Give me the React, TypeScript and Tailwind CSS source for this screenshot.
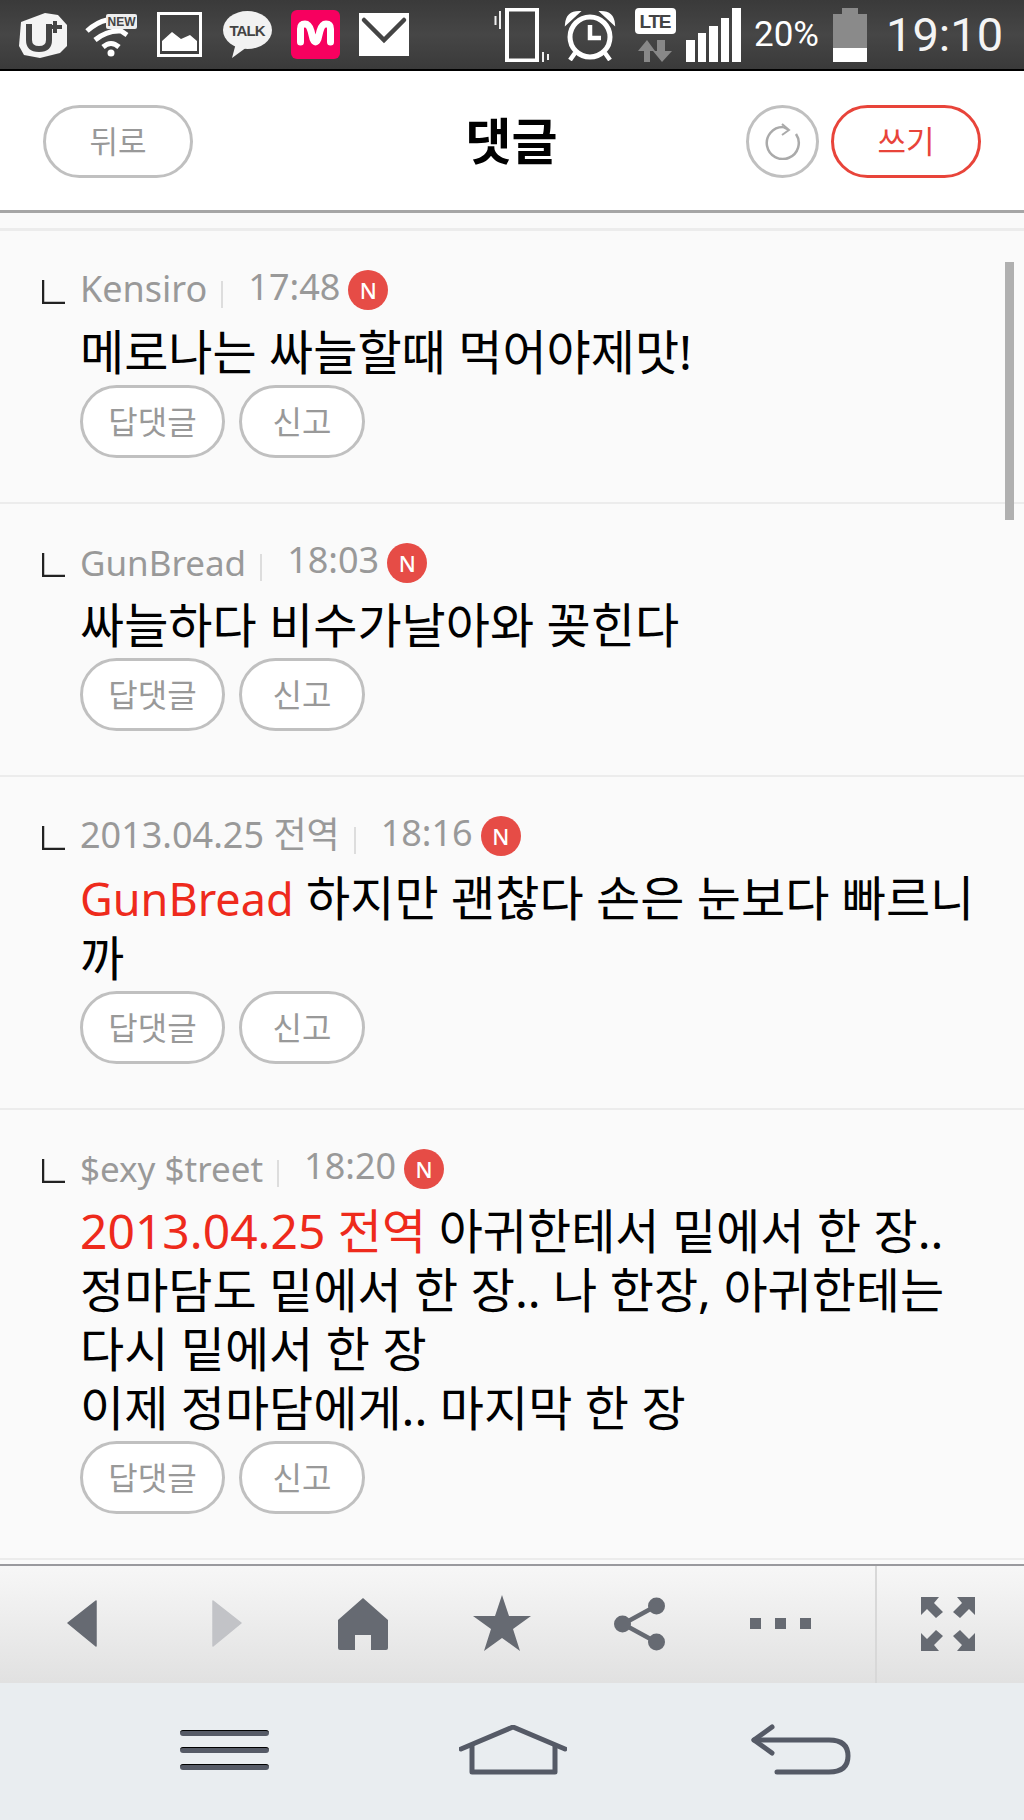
import React from 'react';

const fontStack = "font-['Noto_Sans','Noto_Sans_CJK_KR',sans-serif]";

const StatusIcons: React.FC = () => (
  <div className="flex items-center">
    {/* U+ */}
    <svg className="ml-[18px]" width="50" height="46" viewBox="0 0 50 46">
      <path d="M3 10 L27 1 L40 3 L49 13 L49 34 L42 41 L22 46 L6 43 L1 34 Z" fill="#f4f4f4" />
      <path d="M11 12 L11 28 Q11 37 21 37 Q31 37 31 28 L31 12" fill="none" stroke="#444" strokeWidth="6" />
      <path d="M37 9 L37 21 M31 15 L44 15" stroke="#444" strokeWidth="4" />
    </svg>
    {/* wifi + NEW */}
    <svg className="ml-[17px]" width="52" height="44" viewBox="0 0 52 44">
      <path d="M2 18 Q12 9 22 7" fill="none" stroke="#fff" strokeWidth="5" />
      <path d="M10 27 Q22 17 36 18 L42 22" fill="none" stroke="#fff" strokeWidth="5" />
      <path d="M18 34 Q26 27 34 34" fill="none" stroke="#fff" strokeWidth="5" />
      <circle cx="26" cy="40" r="3.5" fill="#fff" />
      <rect x="21" y="1" width="31" height="15" rx="2" fill="#eee" />
      <text x="36.5" y="13" textAnchor="middle" fontSize="12" fontWeight="700" fill="#444" fontFamily="Liberation Sans">NEW</text>
    </svg>
    {/* picture */}
    <svg className="ml-[20px]" width="45" height="45" viewBox="0 0 45 45">
      <rect x="1.5" y="1.5" width="42" height="42" fill="none" stroke="#fff" strokeWidth="3" />
      <path d="M5 39 L5 29 L15 20 L24 27 L33 23 L40 29 L40 39 Z" fill="#fff" />
    </svg>
    {/* talk */}
    <svg className="ml-[21px]" width="49" height="47" viewBox="0 0 49 47">
      <ellipse cx="24.5" cy="19" rx="24.5" ry="19" fill="#f2f2f2" />
      <path d="M13 32 L9 47 L24 36 Z" fill="#f2f2f2" />
      <text x="24.5" y="25" textAnchor="middle" fontSize="15" fontWeight="700" fill="#444" fontFamily="Liberation Sans" textLength="36">TALK</text>
    </svg>
    {/* M */}
    <svg className="ml-[19px]" width="49" height="49" viewBox="0 0 49 49">
      <rect width="49" height="49" rx="6" fill="#f7005f" />
      <path d="M9.5 32 L9.5 19 Q9.5 14 14 14 Q18 14 20 21 L22 29 Q24.5 35 27 29 L29 21 Q31 14 35 14 Q39.5 14 39.5 19 L39.5 32" fill="none" stroke="#fff" strokeWidth="7" strokeLinecap="round" />
    </svg>
    {/* mail */}
    <svg className="ml-[19px]" width="50" height="43" viewBox="0 0 50 43">
      <rect width="50" height="43" fill="#fff" />
      <path d="M5 7 L25 27 L45 7" fill="none" stroke="#444" strokeWidth="4.5" strokeLinecap="round" />
    </svg>
  </div>
);

const StatusRight: React.FC = () => (
  <div className="flex items-center">
    {/* vibrate */}
    <svg width="57" height="54" viewBox="0 0 57 54">
      <rect x="13" y="1.5" width="30" height="51" fill="none" stroke="#fff" strokeWidth="4" />
      <path d="M6 3 V21 M1.5 8 V17 M49 44 V54 M54 46 V52" stroke="#f0f0f0" strokeWidth="2" />
    </svg>
    {/* alarm */}
    <svg className="ml-[13px]" width="52" height="52" viewBox="0 0 52 52">
      <circle cx="26" cy="28" r="20" fill="none" stroke="#fff" strokeWidth="5" />
      <path d="M26 16 V29 H37" fill="none" stroke="#fff" strokeWidth="4.5" />
      <path d="M2 15 Q3 3 15 3 Z M50 15 Q49 3 37 3 Z" fill="#fff" stroke="#fff" strokeWidth="2" />
      <path d="M11 44 L6 51 M41 44 L46 51" stroke="#fff" strokeWidth="4.5" />
    </svg>
    {/* LTE + arrows */}
    <svg className="ml-[19px]" width="41" height="54" viewBox="0 0 41 54">
      <rect width="41" height="26" rx="4" fill="#fff" />
      <text x="20.5" y="20" textAnchor="middle" fontSize="19" fontWeight="700" fill="#444" fontFamily="Liberation Sans" textLength="32">LTE</text>
      <path d="M3 43 H9 V54 H15 V43 H20 L12 32 Z" fill="#888" />
      <path d="M22 32 H30 V43 H37 L27 54 L18 43 H22 Z" fill="#888" />
    </svg>
    {/* signal */}
    <div className="ml-[10px] flex h-[54px] w-[55px] items-end gap-[3px]">
      <div className="h-[22px] w-[9px] bg-white" />
      <div className="h-[29px] w-[8px] bg-white" />
      <div className="h-[36px] w-[9px] bg-white" />
      <div className="h-[44px] w-[8px] bg-white" />
      <div className="h-[54px] w-[9px] bg-white" />
    </div>
    <span className="ml-[13px] w-[65px] text-[35px] leading-none text-white font-['Roboto',sans-serif]">20%</span>
    {/* battery */}
    <div className="ml-[14px] flex h-[54px] w-[34px] flex-col items-center">
      <div className="h-[6px] w-[16px] bg-[#8a8a8a]" />
      <div className="h-[34px] w-[34px] bg-[#8a8a8a]" />
      <div className="h-[14px] w-[34px] bg-white" />
    </div>
    <span className="ml-[19px] w-[116px] text-[47px] leading-none text-[#f4f4f4] font-['Roboto',sans-serif]">19:10</span>
  </div>
);

const PillButton: React.FC<{ label: string; className: string }> = ({ label, className }) => (
  <button className={`flex h-[73px] items-center justify-center rounded-full border-[3px] border-[#c0c0c0] bg-white text-[32px] text-[#999] ${className}`}>
    {label}
  </button>
);

interface Comment {
  name: React.ReactNode;
  time: string;
  body: React.ReactNode;
}

const comments: Comment[] = [
  { name: <span className="text-[36px]">Kensiro</span>, time: '17:48', body: '메로나는 싸늘할때 먹어야제맛!' },
  { name: 'GunBread', time: '18:03', body: '싸늘하다 비수가날아와 꽂힌다' },
  {
    name: <span className="text-[36px]">2013.04.25 전역</span>,
    time: '18:16',
    body: (
      <>
        <span className="text-[45px] text-[#ee2a1c]">GunBread</span> 하지만 괜찮다 손은 눈보다 빠르니
        <br />
        까
      </>
    ),
  },
  {
    name: '$exy $treet',
    time: '18:20',
    body: (
      <>
        <span className="text-[#ee2a1c]">2013.04.25 전역</span> 아귀한테서 밑에서 한 장..
        <br />
        정마담도 밑에서 한 장.. 나 한장, 아귀한테는
        <br />
        다시 밑에서 한 장
        <br />
        이제 정마담에게.. 마지막 한 장
      </>
    ),
  },
];

const CommentRow: React.FC<{ comment: Comment }> = ({ comment }) => (
  <div className="border-b-[2px] border-[#ececec] pb-[44px] pl-[42px] pt-[38px]">
    <div className="flex h-[40px] items-center">
      <svg className="mt-[6px]" width="23" height="24" viewBox="0 0 23 24">
        <path d="M1 0 V23 H23" fill="none" stroke="#222" strokeWidth="2.5" />
      </svg>
      <span className="ml-[15px] text-[35px] leading-none text-[#999]">{comment.name}</span>
      <span className="ml-[14px] mt-[10px] h-[27px] w-[2px] bg-[#ddd]" />
      <span className="mb-[4px] ml-[25px] text-[36px] leading-none text-[#999]">{comment.time}</span>
      <span className="mt-[2px] ml-[8px] flex h-[40px] w-[40px] items-center justify-center rounded-full bg-[#e64c46] text-[22px] font-medium text-white">
        N
      </span>
    </div>
    <div className="ml-[38px] mt-[13px] text-[48px] leading-[59px] text-black">{comment.body}</div>
    <div className="ml-[38px] mt-[4px] flex gap-[14px]">
      <PillButton label="답댓글" className="w-[145px]" />
      <PillButton label="신고" className="w-[126px]" />
    </div>
  </div>
);

const App: React.FC = () => {
  return (
    <div className={`flex h-[1820px] w-[1024px] flex-col overflow-hidden bg-[#fafafa] ${fontStack}`}>
      {/* status bar */}
      <div className="flex h-[71px] shrink-0 items-center justify-between border-b-[2px] border-black bg-gradient-to-b from-[#3a3a3a] via-[#464646] to-[#3a3a3a] pr-[22px]">
        <StatusIcons />
        <StatusRight />
      </div>

      {/* header */}
      <div className="relative flex h-[142px] shrink-0 items-center border-b-[3px] border-[#a6a6a6] bg-white px-[43px] pt-[1px]">
        <button className="flex h-[73px] w-[150px] items-center justify-center rounded-full border-[3px] border-[#c0c0c0] text-[31px] text-[#999]">
          뒤로
        </button>
        <h1 className="flex-1 pl-[84px] text-center text-[50px] font-bold text-black">댓글</h1>
        <button className="flex h-[73px] w-[73px] items-center justify-center rounded-full border-[3px] border-[#c0c0c0]">
          <svg width="36" height="38" viewBox="0 0 36 38">
            <path d="M18 5 A16 16 0 1 0 31 12" fill="none" stroke="#aaa" strokeWidth="2.5" />
            <path d="M17 2 L24 8 L17 13 M18 5 L24 8" fill="none" stroke="#aaa" strokeWidth="2" />
          </svg>
        </button>
        <button className="ml-[12px] flex h-[73px] w-[150px] items-center justify-center rounded-full border-[3px] border-[#e8443a] text-[31px] text-[#e8443a]">
          쓰기
        </button>
      </div>

      {/* comments */}
      <div className="relative flex-1 overflow-hidden">
        <div className="h-[15px] border-b-[3px] border-[#ececec] box-content" />
        {comments.map((c) => (
          <CommentRow key={c.time} comment={c} />
        ))}
        {/* scrollbar */}
        <div className="absolute right-[10px] top-[49px] h-[258px] w-[9px] bg-[#b0b0b0]" />
      </div>

      {/* browser toolbar */}
      <div className="flex h-[119px] shrink-0 border-t-[2px] border-[#9a9a9e] bg-gradient-to-b from-[#f7f7f7] to-[#e1e1e1]">
        <div className="flex w-[875px] items-center pb-[2px]">
          <svg className="ml-[67px]" width="30" height="47" viewBox="0 0 30 47">
            <path d="M29 1 V46 L1 23 Z" fill="#666a72" stroke="#666a72" strokeWidth="1.5" strokeLinejoin="round" />
          </svg>
          <svg className="ml-[115px]" width="30" height="47" viewBox="0 0 30 47">
            <path d="M1 1 V46 L29 23 Z" fill="#c2c3c7" stroke="#c2c3c7" strokeWidth="1.5" strokeLinejoin="round" />
          </svg>
          <svg className="ml-[96px]" width="50" height="52" viewBox="0 0 50 52">
            <path d="M25 0 L50 22 V50 Q50 52 48 52 H33 V37 H17 V52 H2 Q0 52 0 50 V22 Z" fill="#666a72" />
          </svg>
          <svg className="ml-[85px]" width="58" height="57" viewBox="0 0 58 57">
            <path d="M29 0 L36 21 L58 21 L40 34 L47 56 L29 43 L11 56 L18 34 L0 21 L22 21 Z" fill="#666a72" />
          </svg>
          <svg className="ml-[83px]" width="51" height="54" viewBox="0 0 51 54">
            <path d="M42 9 L9 27 L42 45" fill="none" stroke="#666a72" strokeWidth="4.5" />
            <circle cx="42.5" cy="9" r="8.5" fill="#666a72" />
            <circle cx="8.5" cy="27" r="8.5" fill="#666a72" />
            <circle cx="42.5" cy="45" r="8.5" fill="#666a72" />
          </svg>
          <div className="ml-[85px] flex gap-[14px]">
            <div className="h-[11px] w-[11px] bg-[#666a72]" />
            <div className="h-[11px] w-[11px] bg-[#666a72]" />
            <div className="h-[11px] w-[11px] bg-[#666a72]" />
          </div>
        </div>
        <div className="flex flex-1 items-center border-l-[2px] border-[#d8d8d8] pb-[2px] pl-[43px]">
          <svg width="56" height="56" viewBox="0 0 56 56">
            <g fill="#666a72">
              <path d="M1 1 H19 L14 7 L23 16 L16 22 L7 13 L1 19 Z" />
              <path d="M55 1 H37 L42 7 L33 16 L40 22 L49 13 L55 19 Z" />
              <path d="M1 55 H19 L14 49 L23 40 L16 34 L7 43 L1 37 Z" />
              <path d="M55 55 H37 L42 49 L33 40 L40 34 L49 43 L55 37 Z" />
            </g>
          </svg>
        </div>
      </div>

      {/* android nav */}
      <div className="flex h-[137px] shrink-0 items-center bg-[#e9edf0] pb-[4px]">
        <div className="ml-[180px] flex w-[89px] flex-col gap-[11px]">
          <div className="h-[6px] rounded-full border-t border-black bg-[#555a66]" />
          <div className="h-[6px] rounded-full border-t border-black bg-[#555a66]" />
          <div className="h-[6px] rounded-full border-t border-black bg-[#555a66]" />
        </div>
        <svg className="ml-[190px]" width="108" height="50" viewBox="0 0 108 50">
          <path d="M2 24 L54 2 L106 24" fill="none" stroke="#555a66" strokeWidth="5" strokeLinecap="round" />
          <path d="M13 20 V47 H96 V20" fill="none" stroke="#555a66" strokeWidth="5" strokeLinejoin="round" />
        </svg>
        <svg className="ml-[184px]" width="100" height="52" viewBox="0 0 100 52">
          <path d="M21 3 L3 16 L21 29" fill="none" stroke="#555a66" strokeWidth="5" strokeLinecap="round" strokeLinejoin="round" />
          <path d="M3 16 H78 Q97 16 97 32 Q97 48 78 48 H26" fill="none" stroke="#555a66" strokeWidth="5" strokeLinecap="round" />
        </svg>
      </div>
    </div>
  );
};

export default App;
